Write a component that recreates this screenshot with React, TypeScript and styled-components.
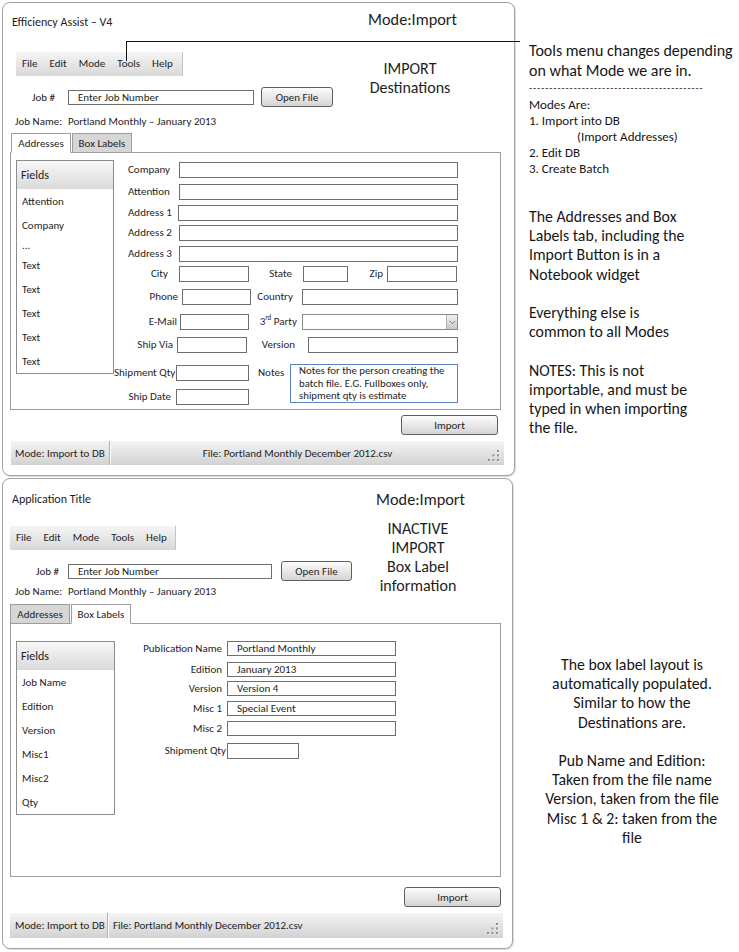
import React from "react";
import styled, { createGlobalStyle } from "styled-components";

const FONT = `Carlito, Lato, "Liberation Sans", sans-serif`;

const GlobalStyle = createGlobalStyle`
  html, body { margin: 0; padding: 0; background: #ffffff; }
  body { font-family: ${FONT}; color: #1e1e1e; }
  *, *::before, *::after { box-sizing: border-box; }
`;

const Page = styled.main`
  width: 739px;
  height: 952px;
  overflow: hidden;
  padding: 2px 0 0 2px;
  display: flex;
  flex-direction: column;
  gap: 2px;
`;

const Row = styled.div`
  position: relative;
  display: flex;
  align-items: flex-start;
`;

const Connector = styled.div`
  position: absolute;
  left: 124px;
  top: 39px;
  width: 394px;
  height: 20px;
  border-top: 1px solid #111;
  border-left: 1px solid #111;
  pointer-events: none;
`;

const Window = styled.section<{ $w: number; $h: number }>`
  flex-shrink: 0;
  width: ${(p) => p.$w}px;
  height: ${(p) => p.$h}px;
  border: 1px solid #a2a2a2;
  border-radius: 8px;
  box-shadow: 1px 1px 1px rgba(0, 0, 0, 0.14);
  padding-left: 7px;
  display: flex;
  flex-direction: column;
  background: #fff;
`;

const TitleBar = styled.header<{ $h: number; $pr: number }>`
  height: ${(p) => p.$h}px;
  padding: 0 ${(p) => p.$pr}px 0 2px;
  display: flex;
  align-items: center;
  justify-content: space-between;
`;

const AppTitle = styled.h1`
  margin: 0;
  font-size: 12px;
  font-weight: 400;
  line-height: 16px;
`;

const ModeTitle = styled.div<{ $lift: number }>`
  font-size: 16.3px;
  line-height: 20px;
  margin-bottom: ${(p) => p.$lift}px;
`;

const Upper = styled.div`
  display: flex;
  align-items: flex-start;
`;

const UpperMain = styled.div<{ $w: number }>`
  width: ${(p) => p.$w}px;
  flex-shrink: 0;
  display: flex;
  flex-direction: column;
`;

const MenuBar = styled.nav<{ $w: number; $ml: number; $mt: number }>`
  width: ${(p) => p.$w}px;
  margin: ${(p) => p.$mt}px 0 0 ${(p) => p.$ml}px;
  height: 24px;
  display: flex;
  align-items: center;
  gap: 12px;
  padding-left: 6px;
  background: linear-gradient(#f5f5f5, #d8d8d8);
  border-right: 1px solid #c4c4c4;
  font-size: 11px;
`;

const MenuItem = styled.span`
  line-height: 14px;
`;

const JobRow = styled.div<{ $mt: number }>`
  margin-top: ${(p) => p.$mt}px;
  height: 20px;
  display: flex;
  align-items: center;
`;

const JobLabel = styled.label<{ $w: number }>`
  width: ${(p) => p.$w}px;
  flex-shrink: 0;
  text-align: right;
  font-size: 11px;
`;

const PushButton = styled.button<{ $w: number; $h: number; $ml?: number }>`
  width: ${(p) => p.$w}px;
  height: ${(p) => p.$h}px;
  margin-left: ${(p) => p.$ml ?? 0}px;
  flex-shrink: 0;
  padding: 0;
  font-family: ${FONT};
  font-size: 11px;
  color: #1e1e1e;
  border: 1px solid #5e5e5e;
  border-radius: 3px;
  background: linear-gradient(#fcfcfc, #e6e6e6 55%, #d4d4d4);
`;

const JobName = styled.div<{ $mt: number }>`
  margin: ${(p) => p.$mt}px 0 0 5px;
  font-size: 11px;
  line-height: 14px;
  display: flex;
`;

const JobNameLabel = styled.span`
  width: 53px;
  flex-shrink: 0;
`;

const ModeNote = styled.div<{ $mt: number }>`
  width: 120px;
  margin-top: ${(p) => p.$mt}px;
  text-align: center;
  font-size: 16px;
  line-height: 19px;
`;

const Notebook = styled.div`
  display: flex;
  flex-direction: column;
`;

const TabStrip = styled.div<{ $pl: number; $mt: number }>`
  display: flex;
  gap: 1px;
  padding-left: ${(p) => p.$pl}px;
  margin-top: ${(p) => p.$mt}px;
  margin-bottom: -1px;
  position: relative;
  z-index: 1;
`;

const Tab = styled.div<{ $active: boolean }>`
  width: 60px;
  height: 20px;
  border: 1px solid #9c9c9c;
  border-bottom-color: ${(p) => (p.$active ? "#ffffff" : "#9c9c9c")};
  background: ${(p) => (p.$active ? "#ffffff" : "#d6d6d6")};
  font-size: 11px;
  display: flex;
  align-items: center;
  justify-content: center;
`;

const Panel = styled.div<{ $h: number; $pt: number }>`
  width: 491px;
  height: ${(p) => p.$h}px;
  border: 1px solid #9c9c9c;
  padding: ${(p) => p.$pt}px 0 0 5px;
  display: flex;
  align-items: flex-start;
`;

const FieldList = styled.div<{ $w: number }>`
  width: ${(p) => p.$w}px;
  flex-shrink: 0;
  border: 1px solid #8c8c8c;
  background: #fff;
  display: flex;
  flex-direction: column;
`;

const FieldHeader = styled.div`
  height: 28px;
  padding-left: 4px;
  display: flex;
  align-items: center;
  font-size: 12px;
  background: linear-gradient(#f7f7f7, #dadada);
`;

const FieldItem = styled.div<{ $h?: number }>`
  height: ${(p) => p.$h ?? 24}px;
  padding-left: 5px;
  display: flex;
  align-items: center;
  font-size: 11px;
`;

const Form = styled.div`
  display: flex;
  flex-direction: column;
`;

const FormRow = styled.div<{ $mt: number; $h?: number }>`
  margin-top: ${(p) => p.$mt}px;
  height: ${(p) => p.$h ?? 16}px;
  display: flex;
  align-items: center;
`;

const Label = styled.label<{ $w: number; $align?: "left" | "right"; $pl?: number }>`
  width: ${(p) => p.$w}px;
  flex-shrink: 0;
  padding-left: ${(p) => p.$pl ?? 0}px;
  text-align: ${(p) => p.$align ?? "right"};
  font-size: 11px;
  line-height: 16px;
  white-space: nowrap;
  sup {
    font-size: 7px;
    line-height: 0;
  }
`;

const Box = styled.div<{ $w: number; $ml: number; $h?: number }>`
  width: ${(p) => p.$w}px;
  height: ${(p) => p.$h ?? 16}px;
  margin-left: ${(p) => p.$ml}px;
  flex-shrink: 0;
  border: 1px solid #6e6e6e;
  background: #fff;
  padding-left: 9px;
  font-size: 11px;
  line-height: 13px;
  white-space: nowrap;
`;

const Select = styled.div<{ $w: number; $ml: number }>`
  width: ${(p) => p.$w}px;
  height: 16px;
  margin-left: ${(p) => p.$ml}px;
  flex-shrink: 0;
  border: 1px solid #8a8a8a;
  background: #fff;
  display: flex;
  justify-content: flex-end;
`;

const SelectArrow = styled.div`
  width: 11px;
  height: 100%;
  border-left: 1px solid #b4b4b4;
  background: linear-gradient(#f0f0f0, #c9c9c9);
  display: flex;
  align-items: center;
  justify-content: center;
`;

const SplitBlock = styled.div<{ $mt: number }>`
  margin-top: ${(p) => p.$mt}px;
  display: flex;
  align-items: flex-start;
`;

const SplitColumn = styled.div<{ $w: number }>`
  width: ${(p) => p.$w}px;
  flex-shrink: 0;
  display: flex;
  flex-direction: column;
`;

const NotesBox = styled.div`
  width: 168px;
  height: 39px;
  margin-top: -1px;
  border: 1px solid #5b84c4;
  padding: 0 4px 0 8px;
  font-size: 10.8px;
  line-height: 12.5px;
`;

const ButtonRow = styled.div<{ $mt: number; $pr: number }>`
  width: 491px;
  margin-top: ${(p) => p.$mt}px;
  padding-right: ${(p) => p.$pr}px;
  display: flex;
  justify-content: flex-end;
`;

const StatusBar = styled.footer<{ $mt: number; $ml: number; $h: number }>`
  width: 493px;
  height: ${(p) => p.$h}px;
  margin: ${(p) => p.$mt}px 0 0 ${(p) => p.$ml}px;
  display: flex;
  align-items: stretch;
  background: linear-gradient(#f4f4f4, #d2d2d2);
  font-size: 11px;
`;

const StatusCell = styled.div<{ $w?: number; $center?: boolean; $pl: number }>`
  ${(p) => (p.$w ? `width: ${p.$w}px; flex-shrink: 0;` : "flex: 1;")}
  padding-left: ${(p) => p.$pl}px;
  display: flex;
  align-items: center;
  justify-content: ${(p) => (p.$center ? "center" : "flex-start")};
  white-space: nowrap;
`;

const StatusDivider = styled.div`
  width: 2px;
  flex-shrink: 0;
  border-left: 1px solid #b0b0b0;
  border-right: 1px solid #fbfbfb;
`;

const Grip = styled.div`
  width: 20px;
  flex-shrink: 0;
  display: flex;
  align-items: flex-end;
  justify-content: flex-end;
  padding: 0 4px 3px 0;
`;

const Aside = styled.aside<{ $ml: number; $w: number; $pt: number; $center?: boolean }>`
  flex-shrink: 0;
  margin-left: ${(p) => p.$ml}px;
  width: ${(p) => p.$w}px;
  padding-top: ${(p) => p.$pt}px;
  text-align: ${(p) => (p.$center ? "center" : "left")};
  color: #161616;
`;

const ToolsNote = styled.p`
  margin: 0;
  font-size: 16px;
  line-height: 20px;
  white-space: nowrap;
`;

const Dashes = styled.div`
  margin-top: 1px;
  white-space: nowrap;
  font-size: 10px;
  line-height: 12px;
  letter-spacing: 1px;
`;

const ModesList = styled.div`
  margin-top: 3px;
  font-size: 13px;
  line-height: 16px;
`;

const ModeLine = styled.div<{ $indent?: number }>`
  padding-left: ${(p) => p.$indent ?? 0}px;
`;

const Para = styled.p<{ $mt: number }>`
  margin: ${(p) => p.$mt}px 0 0;
  font-size: 15.8px;
  line-height: 19.2px;
  white-space: nowrap;
`;

const Chevron = () => (
  <svg width="7" height="5" viewBox="0 0 7 5">
    <path d="M0.8 1 L3.5 3.8 L6.2 1" fill="none" stroke="#7a7a7a" strokeWidth="1" />
  </svg>
);

const GripIcon = () => (
  <svg width="13" height="13" viewBox="0 0 13 13">
    {[
      [10, 1],
      [5.5, 5.5],
      [10, 5.5],
      [1, 10],
      [5.5, 10],
      [10, 10],
    ].map(([x, y], i) => (
      <g key={i}>
        <rect x={x + 0.6} y={y + 0.6} width="2" height="2" fill="#ffffff" />
        <rect x={x} y={y} width="2" height="2" fill="#8d8d8d" />
      </g>
    ))}
  </svg>
);

const MENU = ["File", "Edit", "Mode", "Tools", "Help"];

const Menu = ({ w, ml, mt }: { w: number; ml: number; mt: number }) => (
  <MenuBar $w={w} $ml={ml} $mt={mt}>
    {MENU.map((m) => (
      <MenuItem key={m}>{m}</MenuItem>
    ))}
  </MenuBar>
);

const Status = ({ mt, ml, h, centered, pl }: { mt: number; ml: number; h: number; centered: boolean; pl: number }) => (
  <StatusBar $mt={mt} $ml={ml} $h={h}>
    <StatusCell $w={98 - (ml === 0 ? 1 : 0)} $pl={pl}>
      Mode: Import to DB
    </StatusCell>
    <StatusDivider />
    <StatusCell $center={centered} $pl={centered ? 0 : 4}>
      File: Portland Monthly December 2012.csv
    </StatusCell>
    <Grip>
      <GripIcon />
    </Grip>
  </StatusBar>
);

const ImportWindow = () => (
  <Window $w={513} $h={474}>
    <TitleBar $h={38} $pr={57}>
      <AppTitle>Efficiency Assist – V4</AppTitle>
      <ModeTitle $lift={6}>Mode:Import</ModeTitle>
    </TitleBar>
    <Upper>
      <UpperMain $w={340}>
        <Menu w={167} ml={6} mt={11} />
        <JobRow $mt={11}>
          <JobLabel $w={45}>Job #</JobLabel>
          <Box $w={186} $ml={13} $h={15}>
            Enter Job Number
          </Box>
          <PushButton $w={72} $h={20} $ml={7}>
            Open File
          </PushButton>
        </JobRow>
        <JobName $mt={8}>
          <JobNameLabel>Job Name:</JobNameLabel>
          <span>Portland Monthly – January 2013</span>
        </JobName>
      </UpperMain>
      <ModeNote $mt={18}>
        IMPORT
        <br />
        Destinations
      </ModeNote>
    </Upper>
    <Notebook>
      <TabStrip $pl={1} $mt={4}>
        <Tab $active>Addresses</Tab>
        <Tab $active={false}>Box Labels</Tab>
      </TabStrip>
      <Panel $h={258} $pt={7}>
        <FieldList $w={98}>
          <FieldHeader>Fields</FieldHeader>
          <FieldItem>Attention</FieldItem>
          <FieldItem>Company</FieldItem>
          <FieldItem $h={16}>...</FieldItem>
          <FieldItem>Text</FieldItem>
          <FieldItem>Text</FieldItem>
          <FieldItem>Text</FieldItem>
          <FieldItem>Text</FieldItem>
          <FieldItem>Text</FieldItem>
        </FieldList>
        <Form>
          <FormRow $mt={2}>
            <Label $w={65} $align="left" $pl={14}>Company</Label>
            <Box $w={279} $ml={0} />
          </FormRow>
          <FormRow $mt={6}>
            <Label $w={65} $align="left" $pl={14}>Attention</Label>
            <Box $w={279} $ml={0} />
          </FormRow>
          <FormRow $mt={5}>
            <Label $w={64} $align="left" $pl={14}>Address 1</Label>
            <Box $w={280} $ml={0} />
          </FormRow>
          <FormRow $mt={4}>
            <Label $w={65} $align="left" $pl={14}>Address 2</Label>
            <Box $w={279} $ml={0} />
          </FormRow>
          <FormRow $mt={5}>
            <Label $w={65} $align="left" $pl={14}>Address 3</Label>
            <Box $w={279} $ml={0} />
          </FormRow>
          <FormRow $mt={4}>
            <Label $w={54}>City</Label>
            <Box $w={70} $ml={11} />
            <Label $w={43}>State</Label>
            <Box $w={45} $ml={11} />
            <Label $w={35}>Zip</Label>
            <Box $w={70} $ml={4} />
          </FormRow>
          <FormRow $mt={7}>
            <Label $w={64}>Phone</Label>
            <Box $w={69} $ml={4} />
            <Label $w={42}>Country</Label>
            <Box $w={156} $ml={9} />
          </FormRow>
          <FormRow $mt={9}>
            <Label $w={63}>E-Mail</Label>
            <Box $w={69} $ml={3} />
            <Label $w={48}>
              3<sup>rd</sup> Party
            </Label>
            <Select $w={156} $ml={5}>
              <SelectArrow>
                <Chevron />
              </SelectArrow>
            </Select>
          </FormRow>
          <FormRow $mt={7}>
            <Label $w={59}>Ship Via</Label>
            <Box $w={70} $ml={4} />
            <Label $w={48}>Version</Label>
            <Box $w={150} $ml={13} />
          </FormRow>
          <SplitBlock $mt={12}>
            <SplitColumn $w={135}>
              <FormRow $mt={0}>
                <Label $w={60}>Shipment Qty</Label>
                <Box $w={73} $ml={2} />
              </FormRow>
              <FormRow $mt={8}>
                <Label $w={57}>Ship Date</Label>
                <Box $w={73} $ml={5} />
              </FormRow>
            </SplitColumn>
            <Label $w={41} $align="left" $pl={9}>
              Notes
            </Label>
            <NotesBox>
              Notes for the person creating the batch file. E.G. Fullboxes only, shipment qty is estimate
            </NotesBox>
          </SplitBlock>
        </Form>
      </Panel>
    </Notebook>
    <ButtonRow $mt={5} $pr={3}>
      <PushButton $w={97} $h={20}>
        Import
      </PushButton>
    </ButtonRow>
    <Status mt={6} ml={1} h={24} centered pl={4} />
  </Window>
);

const BoxLabelWindow = () => (
  <Window $w={511} $h={471}>
    <TitleBar $h={40} $pr={47}>
      <AppTitle>Application Title</AppTitle>
      <ModeTitle $lift={0}>Mode:Import</ModeTitle>
    </TitleBar>
    <Upper>
      <UpperMain $w={348}>
        <Menu w={166} ml={0} mt={7} />
        <JobRow $mt={11}>
          <JobLabel $w={49}>Job #</JobLabel>
          <Box $w={204} $ml={9} $h={15}>
            Enter Job Number
          </Box>
          <PushButton $w={71} $h={20} $ml={9}>
            Open File
          </PushButton>
        </JobRow>
        <JobName $mt={4}>
          <JobNameLabel>Job Name:</JobNameLabel>
          <span>Portland Monthly – January 2013</span>
        </JobName>
      </UpperMain>
      <ModeNote $mt={0}>
        INACTIVE
        <br />
        IMPORT
        <br />
        Box Label
        <br />
        information
      </ModeNote>
    </Upper>
    <Notebook>
      <TabStrip $pl={0} $mt={5}>
        <Tab $active={false}>Addresses</Tab>
        <Tab $active>Box Labels</Tab>
      </TabStrip>
      <Panel $h={254} $pt={17}>
        <FieldList $w={99}>
          <FieldHeader>Fields</FieldHeader>
          <FieldItem>Job Name</FieldItem>
          <FieldItem>Edition</FieldItem>
          <FieldItem>Version</FieldItem>
          <FieldItem>Misc1</FieldItem>
          <FieldItem>Misc2</FieldItem>
          <FieldItem>Qty</FieldItem>
        </FieldList>
        <Form>
          <FormRow $mt={0} $h={15}>
            <Label $w={107}>Publication Name</Label>
            <Box $w={169} $ml={5} $h={15}>
              Portland Monthly
            </Box>
          </FormRow>
          <FormRow $mt={6} $h={15}>
            <Label $w={107}>Edition</Label>
            <Box $w={169} $ml={5} $h={15}>
              January 2013
            </Box>
          </FormRow>
          <FormRow $mt={4} $h={15}>
            <Label $w={107}>Version</Label>
            <Box $w={169} $ml={5} $h={15}>
              Version 4
            </Box>
          </FormRow>
          <FormRow $mt={5} $h={15}>
            <Label $w={107}>Misc 1</Label>
            <Box $w={169} $ml={5} $h={15}>
              Special Event
            </Box>
          </FormRow>
          <FormRow $mt={5} $h={15}>
            <Label $w={107}>Misc 2</Label>
            <Box $w={169} $ml={5} $h={15} />
          </FormRow>
          <FormRow $mt={7} $h={16}>
            <Label $w={111}>Shipment Qty</Label>
            <Box $w={72} $ml={1} $h={16} />
          </FormRow>
        </Form>
      </Panel>
    </Notebook>
    <ButtonRow $mt={10} $pr={0}>
      <PushButton $w={97} $h={20}>
        Import
      </PushButton>
    </ButtonRow>
    <Status mt={6} ml={0} h={25} centered={false} pl={5} />
  </Window>
);

export default function App() {
  return (
    <>
      <GlobalStyle />
      <Page>
        <Row>
          <ImportWindow />
          <Aside $ml={14} $w={210} $pt={39}>
            <ToolsNote>
              Tools menu changes depending
              <br />
              on what Mode we are in.
            </ToolsNote>
            <Dashes>{"-".repeat(43)}</Dashes>
            <ModesList>
              <ModeLine>Modes Are:</ModeLine>
              <ModeLine>1. Import into DB</ModeLine>
              <ModeLine $indent={48}>(Import Addresses)</ModeLine>
              <ModeLine>2. Edit DB</ModeLine>
              <ModeLine>3. Create Batch</ModeLine>
            </ModesList>
            <Para $mt={30}>
              The Addresses and Box
              <br />
              Labels tab, including the
              <br />
              Import Button is in a
              <br />
              Notebook widget
            </Para>
            <Para $mt={19.2}>
              Everything else is
              <br />
              common to all Modes
            </Para>
            <Para $mt={19.2}>
              NOTES: This is not
              <br />
              importable, and must be
              <br />
              typed in when importing
              <br />
              the file.
            </Para>
          </Aside>
          <Connector />
        </Row>
        <Row>
          <BoxLabelWindow />
          <Aside $ml={12} $w={214} $pt={177} $center>
            <Para $mt={0}>
              The box label layout is
              <br />
              automatically populated.
              <br />
              Similar to how the
              <br />
              Destinations are.
            </Para>
            <Para $mt={19.2}>
              Pub Name and Edition:
              <br />
              Taken from the file name
              <br />
              Version, taken from the file
              <br />
              Misc 1 &amp; 2: taken from the
              <br />
              file
            </Para>
          </Aside>
        </Row>
      </Page>
    </>
  );
}
